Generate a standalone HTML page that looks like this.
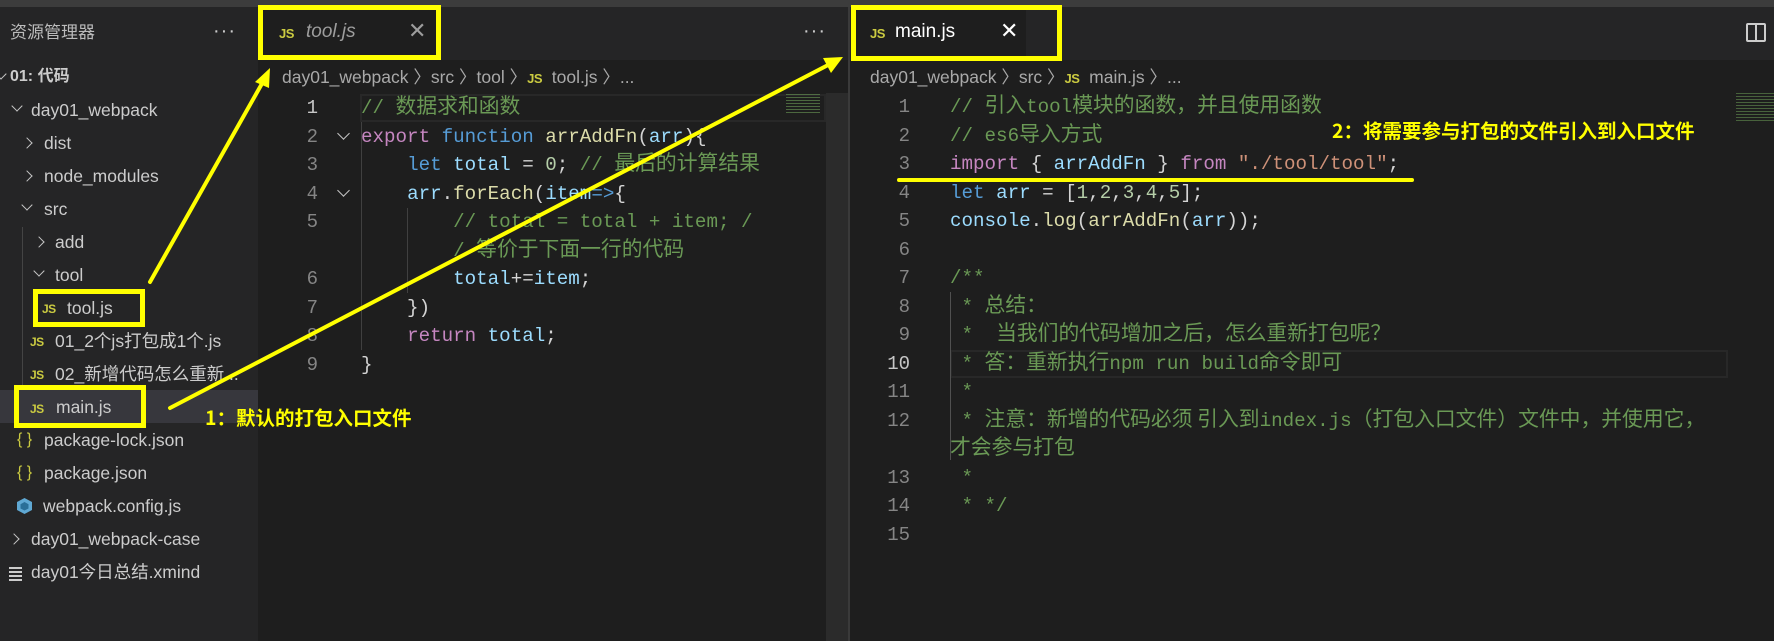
<!DOCTYPE html>
<html><head><meta charset="utf-8"><style>
*{margin:0;padding:0;box-sizing:border-box}
html,body{width:1774px;height:641px;overflow:hidden}
body{background:#1e1e1e;position:relative;font-family:"Liberation Sans","Noto Sans CJK SC",sans-serif;color:#ccc}
.a{position:absolute;white-space:pre}
.top{left:0;top:0;width:1774px;height:7px;background:#3c3c3c}
.side{left:0;top:7px;width:258px;height:634px;background:#252526}
.tabbar{top:7px;height:53px;background:#252526}
.row{font-size:17.5px;color:#cccccc;line-height:20px}
.chev{position:absolute;width:8px;height:8px;border-right:1.6px solid #c5c5c5;border-bottom:1.6px solid #c5c5c5}
.dn{transform:rotate(45deg)}
.rt{transform:rotate(-45deg)}
.js{font-family:"Liberation Sans",sans-serif;font-weight:bold;color:#cbcb41;font-size:12px;letter-spacing:-0.5px}
.code{font-family:"Liberation Mono","Noto Sans CJK SC",monospace;font-size:19.2px;white-space:normal}
.code div{height:28.5px;line-height:28.5px;white-space:pre;overflow:visible}
.c{font-size:20.8px;font-family:"Noto Sans CJK SC",sans-serif;line-height:1}
.ln{font-family:"Liberation Mono",monospace;font-size:19px;color:#858585;text-align:right;width:40px;white-space:normal}
.ln div{height:28.5px;line-height:28.5px}
.cm{color:#6a9955}.kw{color:#c586c0}.bl{color:#569cd6}.vr{color:#9cdcfe}.fn{color:#dcdcaa}.nu{color:#b5cea8}.st{color:#ce9178}.p{color:#d4d4d4}
.bc{font-size:17.5px;color:#a9a9a9;line-height:20px}
.yb{position:absolute;border:5px solid #ffff00}
.ann{font-family:"Noto Sans CJK SC",sans-serif;font-weight:bold;color:#ffff00;font-size:19.5px;line-height:24px}
</style></head><body>
<div class="a top"></div>
<div class="a side"></div>
<div class="a tabbar" style="left:258px;width:591px"></div>
<div class="a tabbar" style="left:850px;width:924px"></div>
<div class="a" style="left:848px;top:7px;width:2px;height:634px;background:#3a3a3a"></div>
<div class="a" style="left:262px;top:9px;width:178px;height:51px;background:#1e1e1e"></div>
<div class="a" style="left:855px;top:9px;width:171px;height:51px;background:#1e1e1e"></div>

<!-- sidebar -->
<div class="a row" style="left:10px;top:23px;font-size:17px;color:#bbb">资源管理器</div>
<div class="a" style="left:213px;top:20px;font-size:20px;color:#ccc;letter-spacing:1px">···</div>
<div class="chev dn" style="left:-3px;top:70px"></div>
<div class="a row" style="left:10px;top:67px;font-weight:bold;font-size:16px;color:#ccc">01: 代码</div>
<div class="chev dn" style="left:13px;top:102px"></div><div class="a row" style="left:31px;top:100px">day01_webpack</div>
<div class="chev rt" style="left:23px;top:139px"></div><div class="a row" style="left:44px;top:133px">dist</div>
<div class="chev rt" style="left:23px;top:172px"></div><div class="a row" style="left:44px;top:166px">node_modules</div>
<div class="chev dn" style="left:23px;top:201px"></div><div class="a row" style="left:44px;top:199px">src</div>
<div class="a" style="left:22px;top:227px;width:1px;height:165px;background:#444"></div>
<div class="chev rt" style="left:35px;top:238px"></div><div class="a row" style="left:55px;top:232px">add</div>
<div class="chev dn" style="left:35px;top:267px"></div><div class="a row" style="left:55px;top:265px">tool</div>
<div class="a js" style="left:42px;top:302px">JS</div><div class="a row" style="left:67px;top:298px">tool.js</div>
<div class="a js" style="left:30px;top:335px">JS</div><div class="a row" style="left:55px;top:331px">01_2个js打包成1个.js</div>
<div class="a js" style="left:30px;top:368px">JS</div><div class="a row" style="left:55px;top:364px;width:200px;overflow:hidden">02_新增代码怎么重新...</div>
<div class="a" style="left:0;top:390px;width:258px;height:33px;background:#37373d"></div>
<div class="a js" style="left:30px;top:402px">JS</div><div class="a row" style="left:56px;top:397px">main.js</div>
<div class="a row" style="left:17px;top:430px;color:#cbcb41;font-size:16px">{ }</div><div class="a row" style="left:44px;top:430px">package-lock.json</div>
<div class="a row" style="left:17px;top:463px;color:#cbcb41;font-size:16px">{ }</div><div class="a row" style="left:44px;top:463px">package.json</div>
<svg class="a" style="left:16px;top:497px" width="17" height="18" viewBox="0 0 17 18"><path d="M8.5 1 L16 5 L16 13 L8.5 17 L1 13 L1 5 Z" fill="#5fa8d3"/><path d="M8.5 5 L12.5 7.2 L12.5 11.5 L8.5 13.5 L4.5 11.5 L4.5 7.2 Z" fill="#2a6f98"/></svg>
<div class="a row" style="left:43px;top:496px">webpack.config.js</div>
<div class="chev rt" style="left:10px;top:535px"></div><div class="a row" style="left:31px;top:529px">day01_webpack-case</div>
<div class="a" style="left:9px;top:567px;width:13px;height:2px;background:#ccc;box-shadow:0 4px 0 #ccc,0 8px 0 #ccc,0 12px 0 #ccc"></div>
<div class="a row" style="left:31px;top:562px">day01今日总结.xmind</div>

<!-- tabs -->
<div class="a js" style="left:279px;top:26px;font-size:13px">JS</div>
<div class="a" style="left:306px;top:21px;font-size:19px;font-style:italic;color:#9d9d9d">tool.js</div>
<div class="a" style="left:408px;top:18px;font-size:22px;color:#9d9d9d">✕</div>
<div class="a" style="left:803px;top:20px;font-size:20px;color:#ccc;letter-spacing:1px">···</div>
<div class="a js" style="left:870px;top:26px;font-size:13px">JS</div>
<div class="a" style="left:895px;top:21px;font-size:19px;color:#fff">main.js</div>
<div class="a" style="left:1000px;top:18px;font-size:22px;color:#fff">✕</div>
<div class="a" style="left:1746px;top:23px;width:20px;height:19px;border:2px solid #ccc;border-radius:2px"></div>
<div class="a" style="left:1755px;top:23px;width:2px;height:19px;background:#ccc"></div>

<!-- breadcrumbs -->
<div class="a bc" style="left:282px;top:67px">day01_webpack 〉src 〉tool 〉<span class="js" style="font-size:13px">JS</span>  tool.js 〉...</div>
<div class="a bc" style="left:870px;top:67px">day01_webpack 〉src 〉<span class="js" style="font-size:13px">JS</span>  main.js 〉...</div>

<!-- left editor -->
<div class="a" style="left:360px;top:94px;width:466px;height:28px;border:2px solid #282828"></div>
<div class="a" style="left:786px;top:94px;width:34px;height:20px;opacity:.6;background:repeating-linear-gradient(#6a9955 0 1px,transparent 1px 3px)"></div>
<div class="a" style="left:826px;top:93px;width:22px;height:548px;background:#2b2b2b"></div>
<div class="a" style="left:361px;top:122px;width:1px;height:228px;background:#404040"></div>
<div class="a" style="left:407px;top:208px;width:1px;height:85px;background:#404040"></div>
<div class="a ln" style="left:278px;top:94px"><div style="color:#c6c6c6">1</div><div>2</div><div>3</div><div>4</div><div>5</div><div></div><div>6</div><div>7</div><div>8</div><div>9</div></div>
<div class="chev dn" style="left:339px;top:129px;border-width:0 1.5px 1.5px 0;width:9px;height:9px"></div>
<div class="chev dn" style="left:339px;top:186px;border-width:0 1.5px 1.5px 0;width:9px;height:9px"></div>
<div class="a code p" style="left:361px;top:94px"><div><span class="cm">// <span class="c">数据求和函数</span></span></div><div><span class="kw">export</span> <span class="bl">function</span> <span class="fn">arrAddFn</span>(<span class="vr">arr</span>){</div><div>    <span class="bl">let</span> <span class="vr">total</span> = <span class="nu">0</span>; <span class="cm">// <span class="c">最后的计算结果</span></span></div><div>    <span class="vr">arr</span>.<span class="fn">forEach</span>(<span class="vr">item</span><span class="bl">=&gt;</span>{</div><div>        <span class="cm">// total = total + item; /</span></div><div>        <span class="cm">/ <span class="c">等价于下面一行的代码</span></span></div><div>        <span class="vr">total</span>+=<span class="vr">item</span>;</div><div>    })</div><div>    <span class="kw">return</span> <span class="vr">total</span>;</div><div>}</div></div>

<!-- right editor -->
<div class="a" style="left:950px;top:350px;width:778px;height:28px;border:2px solid #282828"></div>
<div class="a" style="left:1736px;top:93px;width:38px;height:30px;opacity:.55;background:repeating-linear-gradient(#6a9955 0 1px,transparent 1px 3px)"></div>
<div class="a" style="left:950px;top:292px;width:1px;height:168px;background:#505050"></div>
<div class="a ln" style="left:870px;top:93px"><div>1</div><div>2</div><div>3</div><div>4</div><div>5</div><div>6</div><div>7</div><div>8</div><div>9</div><div style="color:#c6c6c6">10</div><div>11</div><div>12</div><div></div><div>13</div><div>14</div><div>15</div></div>
<div class="a code p" style="left:950px;top:93px"><div><span class="cm">// <span class="c">引入</span>tool<span class="c">模块的函数，并且使用函数</span></span></div><div><span class="cm">// es6<span class="c">导入方式</span></span></div><div><span class="kw">import</span> { <span class="vr">arrAddFn</span> } <span class="kw">from</span> <span class="st">"./tool/tool"</span>;</div><div><span class="bl">let</span> <span class="vr">arr</span> = [<span class="nu">1</span>,<span class="nu">2</span>,<span class="nu">3</span>,<span class="nu">4</span>,<span class="nu">5</span>];</div><div><span class="vr">console</span>.<span class="fn">log</span>(<span class="fn">arrAddFn</span>(<span class="vr">arr</span>));</div><div></div><div><span class="cm">/**</span></div><div><span class="cm"> * <span class="c">总结：</span></span></div><div><span class="cm"> *  <span class="c">当我们的代码增加之后，怎么重新打包呢？</span></span></div><div><span class="cm"> * <span class="c">答：重新执行</span>npm run build<span class="c">命令即可</span></span></div><div><span class="cm"> *</span></div><div><span class="cm"> * <span class="c">注意：新增的代码必须 引入到</span>index.js<span class="c">（打包入口文件）文件中，并使用它，</span></span></div><div><span class="cm"><span class="c">才会参与打包</span></span></div><div><span class="cm"> *</span></div><div><span class="cm"> * */</span></div></div>

<!-- annotations -->
<div class="yb" style="left:258px;top:5px;width:183px;height:55px"></div>
<div class="yb" style="left:33px;top:289px;width:112px;height:38px"></div>
<div class="yb" style="left:14px;top:385px;width:132px;height:43px"></div>
<div class="yb" style="left:851px;top:5px;width:211px;height:56px"></div>
<div class="a" style="left:897px;top:178px;width:517px;height:4px;background:#ffff00;border-radius:2px"></div>
<div class="a ann" style="left:205px;top:405px">1：默认的打包入口文件</div>
<div class="a ann" style="left:1332px;top:118px">2：将需要参与打包的文件引入到入口文件</div>
<svg class="a" style="left:0;top:0" width="1774" height="641">
<line x1="150" y1="282" x2="264" y2="80" stroke="#ffff00" stroke-width="4" stroke-linecap="round"/>
<polygon points="270,68 255,82 269,88" fill="#ffff00"/>
<line x1="170" y1="408" x2="830" y2="64" stroke="#ffff00" stroke-width="4" stroke-linecap="round"/>
<polygon points="843,57 823,58 831,73" fill="#ffff00"/>
</svg>
</body></html>
